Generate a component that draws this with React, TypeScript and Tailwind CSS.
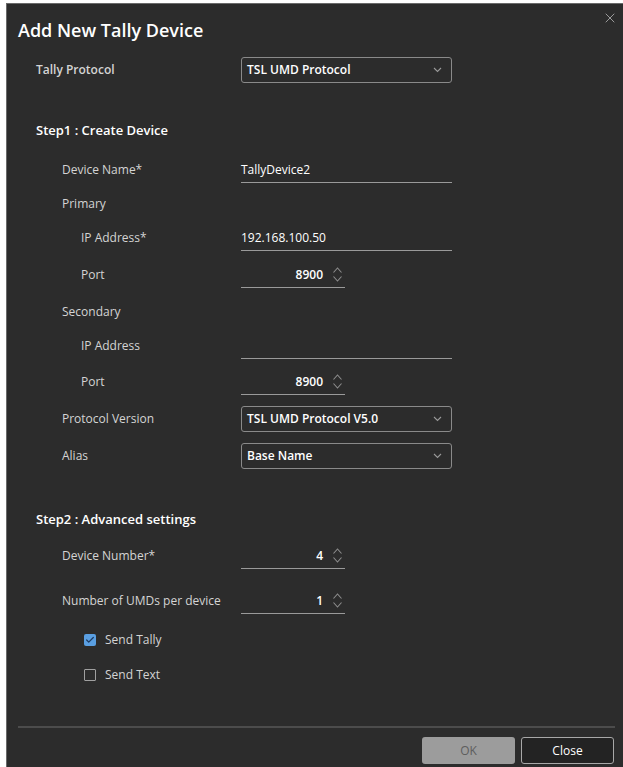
import { X, Check } from 'lucide-react'
import type { ReactNode } from 'react'

function Chevron() {
  return (
    <svg width="9" height="6" viewBox="0 0 9 6" fill="none" className="text-[#9a9a9a]">
      <path d="M1 1l3.5 3.5L8 1" stroke="currentColor" strokeWidth="1.1" />
    </svg>
  )
}

function Spinner() {
  return (
    <svg width="11" height="17" viewBox="0 0 11 17" fill="none" className="text-[#8d8d8d]">
      <path d="M1.5 6.5l4-4.5 4 4.5" stroke="currentColor" strokeWidth="1.1" />
      <path d="M1.5 10.5l4 4.5 4-4.5" stroke="currentColor" strokeWidth="1.1" />
    </svg>
  )
}

function Row({ label, indent, className, bold, children }: { label: string; indent: string; className: string; bold?: boolean; children?: ReactNode }) {
  return (
    <div className={`flex items-center ${className}`}>
      <div className={`w-[205px] shrink-0 ${indent} ${bold ? 'font-semibold' : ''}`}>{label}</div>
      {children}
    </div>
  )
}

function Select({ value }: { value: string }) {
  return (
    <div className="w-[211px] h-full flex items-center justify-between pl-[5px] pr-[9px] border border-[#8a8a8a] rounded-[3px] text-white font-semibold">
      <span>{value}</span>
      <Chevron />
    </div>
  )
}

function TextInput({ value }: { value?: string }) {
  return (
    <div className="w-[211px] h-full flex items-center border-b border-[#9a9a9a] text-white">
      {value}
    </div>
  )
}

function NumberInput({ value }: { value: string }) {
  return (
    <div className="w-[104px] h-full flex items-center justify-end pr-[2px] gap-[9px] border-b border-[#9a9a9a] text-white font-semibold">
      <span>{value}</span>
      <Spinner />
    </div>
  )
}

export default function App() {
  return (
    <div className="min-h-[767px] bg-white pt-[3px] pl-[6px]">
      <div className="relative h-[764px] flex flex-col bg-[#2c2c2c] border-l border-t border-[#6a6a6a] font-['Open_Sans',sans-serif] text-[12px] text-[#d4d4d4]">
        {/* Fermer */}
        <button className="absolute top-[6px] right-[5px] text-[#a4a4a4]">
          <X size={16} strokeWidth={1.4} />
        </button>

        <div className="pl-[11px] pt-[14px] h-[38px] flex items-center text-[18px] leading-[24px] font-semibold text-white">
          Add New Tally Device
        </div>

        <div className="pl-[29px]">
          <Row label="Tally Protocol" indent="pl-0" bold className="h-[26px] mt-[15px]">
            <Select value="TSL UMD Protocol" />
          </Row>

          <div className="h-[20px] mt-[38px] flex items-center text-[13px] font-semibold text-white">
            Step1 : Create Device
          </div>

          <Row label="Device Name*" indent="pl-[26px]" className="h-[26px] mt-[16px]">
            <TextInput value="TallyDevice2" />
          </Row>
          <Row label="Primary" indent="pl-[26px]" className="h-[20px] mt-[11px]" />
          <Row label="IP Address*" indent="pl-[45px]" className="h-[26px] mt-[11px]">
            <TextInput value="192.168.100.50" />
          </Row>
          <Row label="Port" indent="pl-[45px]" className="h-[26px] mt-[11px]">
            <NumberInput value="8900" />
          </Row>
          <Row label="Secondary" indent="pl-[26px]" className="h-[20px] mt-[14px]" />
          <Row label="IP Address" indent="pl-[45px]" className="h-[26px] mt-[11px]">
            <TextInput />
          </Row>
          <Row label="Port" indent="pl-[45px]" className="h-[26px] mt-[10px]">
            <NumberInput value="8900" />
          </Row>
          <Row label="Protocol Version" indent="pl-[26px]" className="h-[26px] mt-[11px]">
            <Select value="TSL UMD Protocol V5.0" />
          </Row>
          <Row label="Alias" indent="pl-[26px]" className="h-[26px] mt-[11px]">
            <Select value="Base Name" />
          </Row>

          <div className="h-[20px] mt-[41px] flex items-center text-[13px] font-semibold text-white">
            Step2 : Advanced settings
          </div>

          <Row label="Device Number*" indent="pl-[26px]" className="h-[26px] mt-[13px]">
            <NumberInput value="4" />
          </Row>
          <Row label="Number of UMDs per device" indent="pl-[26px]" className="h-[26px] mt-[19px]">
            <NumberInput value="1" />
          </Row>

          <label className="h-[20px] mt-[16px] pl-[48px] flex items-center gap-[9px]">
            <span className="w-[12px] h-[12px] rounded-[2px] bg-[#5a9fe2] flex items-center justify-center">
              <Check size={10} strokeWidth={3} className="text-[#1d3b63]" />
            </span>
            Send Tally
          </label>
          <label className="h-[20px] mt-[15px] pl-[48px] flex items-center gap-[9px]">
            <span className="w-[12px] h-[12px] rounded-[1px] border border-[#a0a0a0]" />
            Send Text
          </label>
        </div>

        <div className="mt-auto">
          <div className="ml-[11px] mr-[8px] h-[2px] bg-[#4c4c4c]" />
          <div className="flex justify-end gap-[6px] pr-[9px] pt-[9px] pb-[3px]">
            <button className="w-[93px] h-[27px] rounded-[3px] bg-[#9c9c9c] text-[#5e5e5e] text-[12px]">OK</button>
            <button className="w-[93px] h-[27px] rounded-[3px] bg-[#232323] border border-[#a8a8a8] text-white text-[12px]">Close</button>
          </div>
        </div>
      </div>
    </div>
  )
}
